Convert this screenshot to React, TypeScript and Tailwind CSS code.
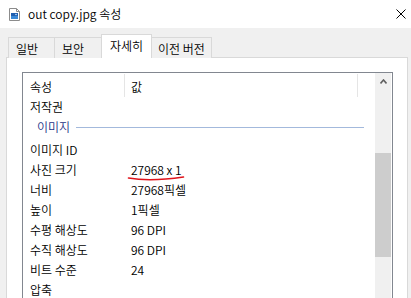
const ROWS: { label: string; value?: string }[] = [
  { label: '이미지 ID' },
  { label: '사진 크기', value: '27968 x 1' },
  { label: '너비', value: '27968픽셀' },
  { label: '높이', value: '1픽셀' },
  { label: '수평 해상도', value: '96 DPI' },
  { label: '수직 해상도', value: '96 DPI' },
  { label: '비트 수준', value: '24' },
  { label: '압축' },
];

const TABS = [
  { name: '일반', w: 'w-[47px]' },
  { name: '보안', w: 'w-[48px]' },
];

function FileIcon() {
  return (
    <svg width="11" height="13" viewBox="0 0 11 13" className="block">
      <path d="M0.5 0.5 H7.5 L10.5 3.5 V12.5 H0.5 Z" fill="#fff" stroke="#8c8c8c" />
      <path d="M7.5 0.5 V3.5 H10.5" fill="none" stroke="#8c8c8c" />
      <rect x="2" y="5" width="7" height="6" fill="#1f5fb0" />
      <rect x="2" y="8" width="7" height="3" fill="#3a8ad8" />
      <circle cx="7" cy="6.5" r="0.8" fill="#cfe6ff" />
    </svg>
  );
}

export default function App() {
  return (
    <div
      className="relative w-[411px] h-[298px] overflow-hidden bg-[#f0f0f0] text-[12px] font-[350] text-black"
      style={{ fontFamily: '"Noto Sans CJK KR", "Noto Sans", sans-serif' }}
    >
      {/* title bar */}
      <div className="h-[28px] bg-white flex items-center">
        <div className="ml-[9px] w-[11px]">
          <FileIcon />
        </div>
        <span className="ml-[8px] leading-none">out copy.jpg 속성</span>
        <svg width="10" height="10" viewBox="0 0 10 10" className="ml-auto mr-[5px]">
          <path d="M0.5 0.5 L9.5 9.5 M9.5 0.5 L0.5 9.5" stroke="#000" strokeWidth="1" />
        </svg>
      </div>

      {/* tabs */}
      <div className="flex items-end h-[30px] pl-[8px] relative z-10">
        {TABS.map((t) => (
          <div
            key={t.name}
            className={`${t.w} pl-[7px] h-[21px] -mr-px border border-b-0 border-[#d9d9d9] bg-[#f0f0f0] flex items-center pt-px leading-none`}
          >
            {t.name}
          </div>
        ))}
        <div className="w-[51px] h-[24px] -mr-px border border-b-0 border-[#d9d9d9] bg-white flex items-start justify-center pt-[5px] leading-none">
          자세히
        </div>
        <div className="w-[61px] h-[21px] border border-b-0 border-[#d9d9d9] bg-[#f0f0f0] flex items-center justify-center pt-px leading-none">
          이전 버전
        </div>
      </div>

      {/* panel */}
      <div className="-mt-px ml-[6px] w-[402px] h-[260px] bg-white border border-[#d9d9d9] pl-[15px] pt-[14px]">
        <div className="w-[371px] h-[260px] border border-[#828790] flex">
          <div className="flex-1 flex flex-col">
            <div className="h-[24px] flex items-start">
              <div className="w-[101px] h-[24px] pl-[7px] pt-[4px] flex items-center">속성</div>
              <div className="w-px h-[23px] mt-px bg-[#e5e5e5]" />
              <div className="w-[232px] h-[24px] pl-[6px] pt-[4px] flex items-center">값</div>
              <div className="w-px h-[23px] mt-px bg-[#e5e5e5]" />
            </div>
            <div className="h-[15px] flex items-center pl-[7px] pt-[4px]">저작권</div>
            <div className="h-[26px] flex items-center pl-[14px] pt-[4px]">
              <span className="text-[#1e3287]">이미지</span>
              <div className="ml-[6px] w-[288px] h-px bg-[#a3b9dc]" />
            </div>
            {ROWS.map((r) => (
              <div key={r.label} className="h-[20px] flex items-center pt-[4px]">
                <div className="w-[101px] pl-[7px]">{r.label}</div>
                <div className="pl-[7px]">{r.value}</div>
              </div>
            ))}
          </div>
          {/* scrollbar */}
          <div className="w-[16px] bg-[#f0f0f0] flex flex-col">
            <div className="h-[17px] flex items-center justify-center">
              <svg width="7" height="5" viewBox="0 0 7 5">
                <path d="M0.5 4.5 L3.5 1 L6.5 4.5" fill="none" stroke="#606060" strokeWidth="1.6" />
              </svg>
            </div>
            <div className="mt-[63px] h-[104px] bg-[#cdcdcd]" />
          </div>
          <div className="w-px bg-white" />
        </div>
      </div>

      {/* red annotation under value */}
      <svg className="absolute left-0 top-0 pointer-events-none" width="411" height="298">
        <path d="M128.5 178 Q150 182 183.5 177" fill="none" stroke="#e0141c" strokeWidth="1.6" strokeLinecap="round" />
      </svg>
    </div>
  );
}
